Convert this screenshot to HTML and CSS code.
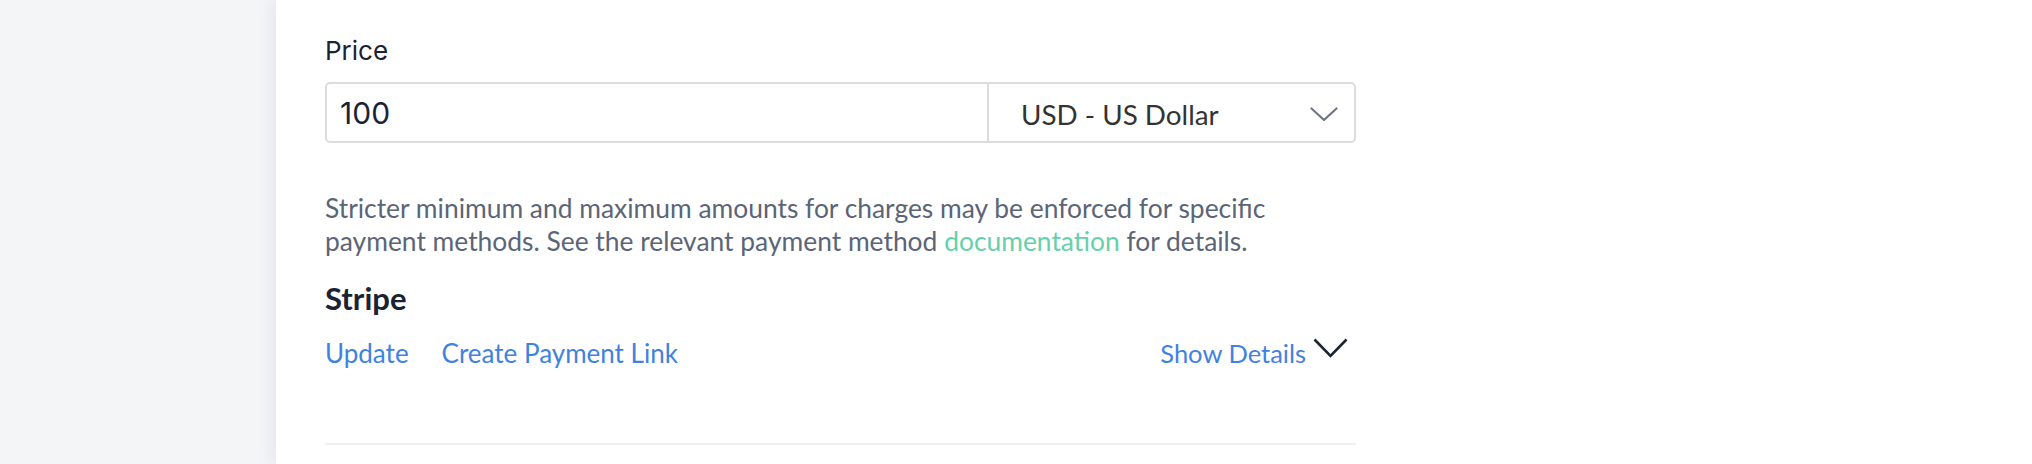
FILE: index.html
```html
<!DOCTYPE html>
<html lang="en">
<head>
<meta charset="utf-8">
<title>Price</title>
<link rel="stylesheet" href="styles.css">
</head>
<body>
<div class="page">
  <aside class="side"></aside>
  <main class="main">
    <div class="form">
      <label class="label" for="price">Price</label>
      <div class="price-field">
        <input id="price" class="amount" type="text" value="100">
        <div class="currency">
          <span class="currency-text">USD - US Dollar</span>
          <svg class="select-chevron" width="28" height="15" viewBox="0 0 28 15"><path d="M1.5 1.5 L14 13 L26.5 1.5" fill="none" stroke="#6f7683" stroke-width="2.2" stroke-linecap="round" stroke-linejoin="round"/></svg>
        </div>
      </div>
      <p class="note"><span>Stricter minimum and maximum amounts for charges may be enforced for specific payment methods. See the relevant payment method</span> <a class="doc-link" href="#">documentation</a> <span>for details.</span></p>
      <h3 class="provider">Stripe</h3>
      <div class="actions">
        <div class="actions-left">
          <a class="action" href="#">Update</a>
          <a class="action" href="#">Create Payment Link</a>
        </div>
        <a class="action details" href="#">Show Details
          <svg class="details-chevron" width="35" height="20" viewBox="0 0 35 20"><path d="M1.5 1.5 L17.5 18 L33.5 1.5" fill="none" stroke="#1e2633" stroke-width="2.6" stroke-linejoin="miter"/></svg>
        </a>
      </div>
      <hr class="divider">
    </div>
  </main>
</div>
</body>
</html>
```
FILE: styles.css
```css
html, body {
  margin: 0;
  padding: 0;
  background: #ffffff;
}

.page {
  display: flex;
  min-height: 464px;
}

.side {
  flex: none;
  width: 276px;
  background: #f4f5f7;
}

.main {
  flex: 1;
  position: relative;
  background: #ffffff;
  box-shadow: -4px 0 16px rgba(20, 30, 50, 0.07);
  padding: 35px 0 0 49px;
}

.form {
  width: 1031px;
  display: flex;
  flex-direction: column;
}

.label {
  display: block;
  font-family: Inter, "Noto Sans", sans-serif;
  font-size: 26px;
  line-height: 32px;
  color: #1a2233;
}

.price-field {
  margin-top: 15px;
  display: flex;
  height: 61px;
  box-sizing: border-box;
  border: 2px solid #dcdcdc;
  border-radius: 5px;
}

.amount {
  flex: 1;
  min-width: 0;
  border: 0;
  outline: none;
  background: transparent;
  padding: 0 0 0 13px;
  font-family: Inter, "Noto Sans", sans-serif;
  font-size: 30px;
  color: #1a2233;
}

.currency {
  flex: none;
  width: 367px;
  box-sizing: border-box;
  border-left: 2px solid #dcdcdc;
  display: flex;
  align-items: center;
  justify-content: space-between;
  padding: 4px 16px 0 32px;
}

.currency-text {
  font-family: Lato, sans-serif;
  font-size: 27.8px;
  color: #333333;
}

.select-chevron {
  display: block;
}

.note {
  margin: 49.3px 0 0;
  font-family: Lato, sans-serif;
  font-size: 26.4px;
  line-height: 33px;
  color: #5b6577;
}

.doc-link {
  color: #66d0ab;
  text-decoration: none;
}

.provider {
  margin: 21.7px 0 0;
  font-family: Lato, sans-serif;
  font-weight: 700;
  font-size: 31px;
  line-height: 36px;
  color: #1a2233;
}

.actions {
  margin-top: 19.9px;
  display: flex;
  justify-content: space-between;
  align-items: center;
  padding-right: 8px;
}

.actions-left {
  display: flex;
  gap: 33px;
}

.action {
  font-family: Lato, sans-serif;
  font-size: 26px;
  line-height: 34px;
  color: #4182e0;
  text-decoration: none;
}

.details {
  display: flex;
  align-items: center;
  gap: 7px;
  font-size: 25.5px;
}

.details-chevron {
  display: block;
  margin-top: -10px;
}

.divider {
  margin: 73px 0 0;
  border: 0;
  height: 2px;
  background: #eeeef3;
}
```
